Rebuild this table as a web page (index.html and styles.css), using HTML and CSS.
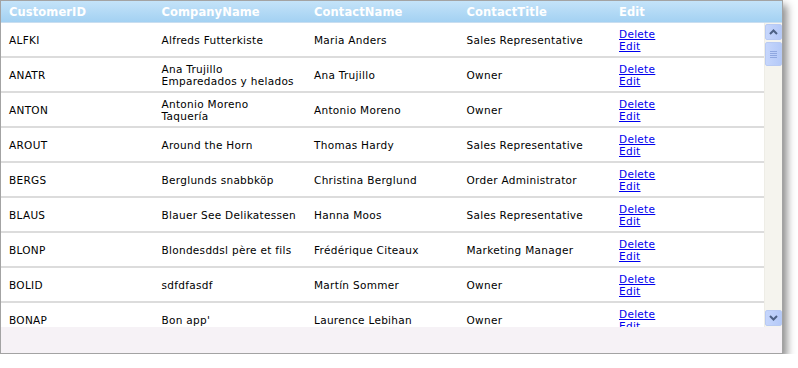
FILE: index.html
```html
<!DOCTYPE html>
<html lang="en">
<head>
    <meta charset="UTF-8">
    <title>Customers</title>
    <link rel="stylesheet" href="styles.css">
</head>
<body>
    <div class="grid">
        <div class="grid-header">
            <div class="col">CustomerID</div>
            <div class="col">CompanyName</div>
            <div class="col">ContactName</div>
            <div class="col">ContactTitle</div>
            <div class="col">Edit</div>
        </div>

        <div class="grid-body">
            <div class="rows">
                <div class="row">
                    <div class="col">ALFKI</div>
                    <div class="col">Alfreds Futterkiste</div>
                    <div class="col">Maria Anders</div>
                    <div class="col">Sales Representative</div>
                    <div class="col links"><a href="#">Delete</a><a href="#">Edit</a></div>
                </div>
                <div class="row">
                    <div class="col">ANATR</div>
                    <div class="col">Ana Trujillo<br>Emparedados y helados</div>
                    <div class="col">Ana Trujillo</div>
                    <div class="col">Owner</div>
                    <div class="col links"><a href="#">Delete</a><a href="#">Edit</a></div>
                </div>
                <div class="row">
                    <div class="col">ANTON</div>
                    <div class="col">Antonio Moreno<br>Taquería</div>
                    <div class="col">Antonio Moreno</div>
                    <div class="col">Owner</div>
                    <div class="col links"><a href="#">Delete</a><a href="#">Edit</a></div>
                </div>
                <div class="row">
                    <div class="col">AROUT</div>
                    <div class="col">Around the Horn</div>
                    <div class="col">Thomas Hardy</div>
                    <div class="col">Sales Representative</div>
                    <div class="col links"><a href="#">Delete</a><a href="#">Edit</a></div>
                </div>
                <div class="row">
                    <div class="col">BERGS</div>
                    <div class="col">Berglunds snabbköp</div>
                    <div class="col">Christina Berglund</div>
                    <div class="col">Order Administrator</div>
                    <div class="col links"><a href="#">Delete</a><a href="#">Edit</a></div>
                </div>
                <div class="row">
                    <div class="col">BLAUS</div>
                    <div class="col">Blauer See Delikatessen</div>
                    <div class="col">Hanna Moos</div>
                    <div class="col">Sales Representative</div>
                    <div class="col links"><a href="#">Delete</a><a href="#">Edit</a></div>
                </div>
                <div class="row">
                    <div class="col">BLONP</div>
                    <div class="col">Blondesddsl père et fils</div>
                    <div class="col">Frédérique Citeaux</div>
                    <div class="col">Marketing Manager</div>
                    <div class="col links"><a href="#">Delete</a><a href="#">Edit</a></div>
                </div>
                <div class="row">
                    <div class="col">BOLID</div>
                    <div class="col">sdfdfasdf</div>
                    <div class="col">Martín Sommer</div>
                    <div class="col">Owner</div>
                    <div class="col links"><a href="#">Delete</a><a href="#">Edit</a></div>
                </div>
                <div class="row">
                    <div class="col">BONAP</div>
                    <div class="col">Bon app'</div>
                    <div class="col">Laurence Lebihan</div>
                    <div class="col">Owner</div>
                    <div class="col links"><a href="#">Delete</a><a href="#">Edit</a></div>
                </div>
            </div>

            <div class="scrollbar">
                <div class="sb-btn">
                    <svg width="9" height="6" viewBox="0 0 9 6"><path d="M1 5 L4.5 1.5 L8 5" fill="none" stroke="#4d6185" stroke-width="2"/></svg>
                </div>
                <div class="sb-thumb">
                    <span></span><span></span><span></span><span></span>
                </div>
                <div class="sb-track"></div>
                <div class="sb-btn">
                    <svg width="9" height="6" viewBox="0 0 9 6"><path d="M1 1 L4.5 4.5 L8 1" fill="none" stroke="#4d6185" stroke-width="2"/></svg>
                </div>
            </div>
        </div>

        <div class="grid-footer"></div>
    </div>
</body>
</html>
```

FILE: styles.css
```css
body {
    margin: 0;
    background: #fff;
    font-family: "DejaVu Sans", Verdana, sans-serif;
}

.grid {
    width: 781px;
    height: 352px;
    border: 1px solid #a3a3a3;
    box-shadow: 4px 5px 8px rgba(0, 0, 0, 0.45);
    display: flex;
    flex-direction: column;
    background: #fff;
}

.grid-header {
    height: 21px;
    display: flex;
    align-items: center;
    background: linear-gradient(to bottom, #c4e3f9, #a3d1f2);
    border-bottom: 1px solid #c9def0;
    color: #fff;
    font-weight: bold;
    font-size: 11.5px;
    letter-spacing: 0.1px;
}

.col {
    width: 152.5px;
    padding-left: 8px;
    box-sizing: border-box;
    flex: none;
}

.grid-body {
    height: 304px;
    display: flex;
}

.rows {
    flex: 1;
    overflow: hidden;
}

.row {
    height: 35px;
    display: flex;
    align-items: center;
    border-bottom: 2px solid #dcdcdc;
    box-sizing: border-box;
    font-size: 10.5px;
    line-height: 12px;
    letter-spacing: 0.3px;
    color: #000;
}

.links {
    display: flex;
    flex-direction: column;
}

.links a {
    color: #0000ee;
    width: max-content;
}

.scrollbar {
    width: 17px;
    display: flex;
    flex-direction: column;
    background: #f5f4ee;
    border-left: 1px solid #eeede6;
}

.sb-btn,
.sb-thumb {
    height: 16px;
    margin: 1px 0;
    background: linear-gradient(to right, #c6d6fc, #b4c9f8);
    border: 1px solid #b8caf3;
    border-radius: 2px;
    display: flex;
    align-items: center;
    justify-content: center;
    box-sizing: border-box;
}

.sb-thumb {
    height: 24px;
    flex-direction: column;
    gap: 1px;
}

.sb-thumb span {
    width: 7px;
    height: 1px;
    background: #8fa7e0;
}

.sb-track {
    flex: 1;
}

.grid-footer {
    flex: 1;
    background: #f6f2f6;
}
```
